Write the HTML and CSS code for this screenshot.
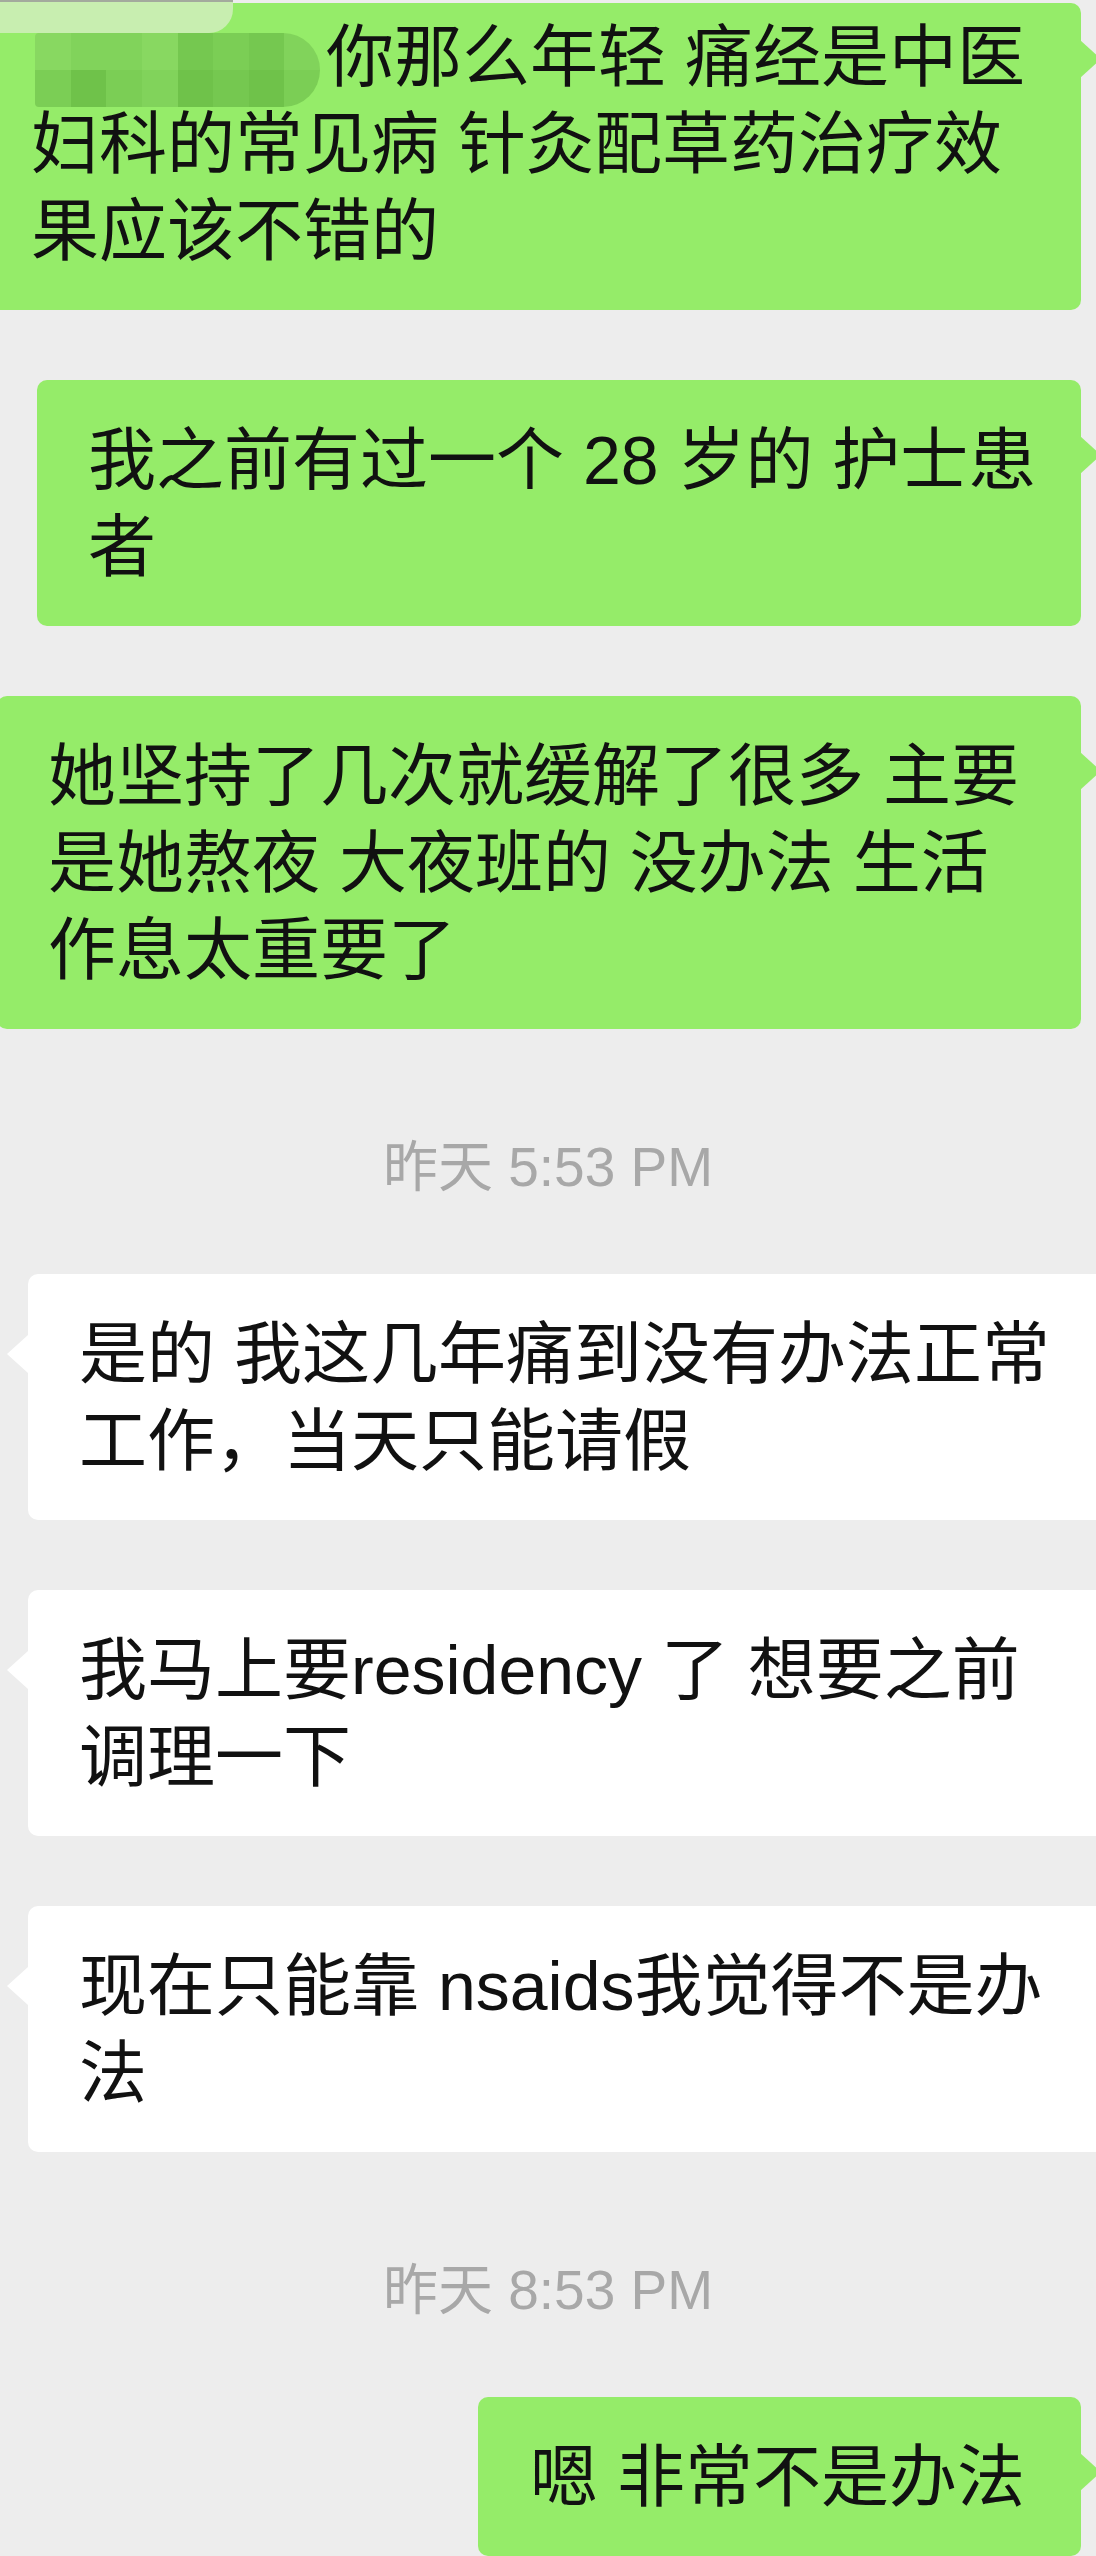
FILE: index.html
```html
<!DOCTYPE html>
<html lang="zh-CN">
<head>
<meta charset="utf-8">
<title>聊天记录</title>
<link rel="stylesheet" href="styles.css">
</head>
<body>
<main class="chat">
  <div class="row me first">
    <div class="bubble green wide b1">
      <span class="glare"></span><span class="censor"><i class="m1"></i><i class="m2"></i><i class="m2"></i><i class="m1"></i><i class="m4"></i><i class="m3"></i><i class="m4"></i><i class="m2"></i><i class="m3"></i><i class="m5"></i><i class="m3"></i><i class="m2"></i><i class="m5"></i><i class="m4"></i><i class="m5"></i><i class="m3"></i></span>你那么年轻 痛经是中医<br>妇科的常见病 针灸配草药治疗效<br>果应该不错的
    </div>
  </div>

  <div class="row me">
    <div class="bubble green wide b2">我之前有过一个 28 岁的 护士患<br>者</div>
  </div>

  <div class="row me">
    <div class="bubble green wide b3">她坚持了几次就缓解了很多 主要<br>是她熬夜 大夜班的 没办法 生活<br>作息太重要了</div>
  </div>

  <div class="time">昨天 5:53 PM</div>

  <div class="row them">
    <div class="bubble white wide">是的 我这几年痛到没有办法正常<br>工作，当天只能请假</div>
  </div>

  <div class="row them">
    <div class="bubble white wide">我马上要residency 了 想要之前<br>调理一下</div>
  </div>

  <div class="row them">
    <div class="bubble white wide">现在只能靠 nsaids我觉得不是办<br>法</div>
  </div>

  <div class="time">昨天 8:53 PM</div>

  <div class="row me">
    <div class="bubble green b7">嗯 非常不是办法</div>
  </div>
</main>
</body>
</html>
```

FILE: styles.css
```css
html, body {
  margin: 0;
  padding: 0;
}

body {
  background: #ededed;
  width: 1096px;
  height: 2556px;
  overflow: hidden;
  font-family: "Liberation Sans", "Noto Sans CJK SC", sans-serif;
  color: #111;
}

.chat {
  display: flex;
  flex-direction: column;
}

.row {
  display: flex;
  margin-top: 70px;
}

.row.first {
  margin-top: 3px;
}

.row.me {
  justify-content: flex-end;
  padding-right: 15px;
}

.row.them {
  padding-left: 28px;
  margin-right: -40px;
}

.bubble {
  position: relative;
  font-size: 68px;
  line-height: 87px;
  padding: 37px 56px 35px 51px;
  border-radius: 10px;
  white-space: nowrap;
}

.wide {
  flex: 1;
  min-width: 0;
}

.green {
  background: #95ec69;
}

.white {
  background: #ffffff;
}

.green::after {
  content: "";
  position: absolute;
  right: -20px;
  top: 56px;
  border-left: 21px solid #95ec69;
  border-top: 19px solid transparent;
  border-bottom: 19px solid transparent;
}

.white::before {
  content: "";
  position: absolute;
  left: -21px;
  top: 61px;
  border-right: 21px solid #ffffff;
  border-top: 19px solid transparent;
  border-bottom: 19px solid transparent;
}

.b1 {
  margin-left: -20px;
  padding-top: 11px;
  border-top-left-radius: 0;
}

.b1::after {
  top: 37px;
}

.b2 {
  margin-left: 37px;
}

.b3 {
  margin-left: -3px;
}

.b7 {
  padding-left: 52px;
}

.glare {
  position: absolute;
  left: 20px;
  top: -3px;
  width: 233px;
  height: 33px;
  background: linear-gradient(#a3aa9d 0 2px, #c8eeb0 2px);
  border-bottom-right-radius: 24px;
}

.censor {
  display: inline-grid;
  grid-template-columns: repeat(8, 1fr);
  grid-template-rows: repeat(2, 1fr);
  width: 285px;
  height: 74px;
  margin: 0 6px 0 4px;
  vertical-align: top;
  position: relative;
  top: 19px;
  border-radius: 4px 37px 37px 4px;
  overflow: hidden;
}

.censor i {
  display: block;
}

.m1 { background: #88d861; }
.m2 { background: #81d35b; }
.m3 { background: #7bce55; }
.m4 { background: #75c850; }
.m5 { background: #6fc24a; }

.time {
  text-align: center;
  font-size: 55px;
  line-height: 60px;
  color: #a8a8a8;
  margin: 108px 0 77px;
}

.time + .row {
  margin-top: 0;
}
```
